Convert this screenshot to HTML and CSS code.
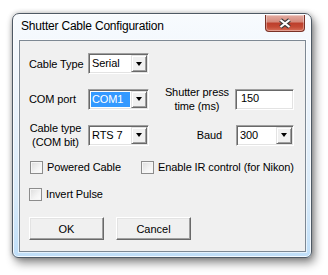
FILE: index.html
```html
<!DOCTYPE html>
<html lang="en">
<head>
    <meta charset="UTF-8">
    <meta name="viewport" content="width=device-width, initial-scale=1.0">
    <title>Shutter Cable Configuration</title>
    <link rel="stylesheet" href="styles.css">
</head>
<body>
    <div class="window">
        <!-- title bar -->
        <div class="titlebar">
            <span class="title">Shutter Cable Configuration</span>
            <span class="close-btn">
                <svg width="14" height="11" viewBox="0 0 14 11">
                    <path d="M2.5 2 L11.5 9 M11.5 2 L2.5 9" stroke="#3c3c3c" stroke-width="4.2" fill="none"/>
                    <path d="M2.5 2 L11.5 9 M11.5 2 L2.5 9" stroke="#ffffff" stroke-width="2.2" fill="none"/>
                </svg>
            </span>
        </div>

        <div class="client">
            <div class="field-row row-first">
                <span class="lbl">Cable Type</span>
                <div class="combo">
                    <span class="combo-text">Serial</span>
                    <span class="combo-btn"><i class="arrow"></i></span>
                </div>
            </div>

            <div class="field-row row-tall">
                <span class="lbl">COM port</span>
                <div class="combo">
                    <span class="combo-text selected">COM1</span>
                    <span class="combo-btn"><i class="arrow"></i></span>
                </div>
                <span class="lbl lbl-center lbl-right">Shutter press<br>time (ms)</span>
                <div class="edit">150</div>
            </div>

            <div class="field-row row-tall row-third">
                <span class="lbl lbl-center">Cable type<br>(COM bit)</span>
                <div class="combo">
                    <span class="combo-text">RTS 7</span>
                    <span class="combo-btn"><i class="arrow"></i></span>
                </div>
                <span class="lbl lbl-baud">Baud</span>
                <div class="combo combo-baud">
                    <span class="combo-text">300</span>
                    <span class="combo-btn"><i class="arrow"></i></span>
                </div>
            </div>

            <div class="check-row">
                <label class="check check-wide"><span class="box"></span>Powered Cable</label>
                <label class="check"><span class="box"></span>Enable IR control (for Nikon)</label>
            </div>

            <div class="check-row check-row-2">
                <label class="check"><span class="box"></span>Invert Pulse</label>
            </div>

            <div class="buttons">
                <button class="btn">OK</button>
                <button class="btn">Cancel</button>
            </div>
        </div>
    </div>
</body>
</html>
```

FILE: styles.css
```css
* {
    margin: 0;
    padding: 0;
    box-sizing: border-box;
}

body {
    font-family: 'Liberation Sans', Arial, sans-serif;
    font-size: 11px;
    letter-spacing: -0.1px;
    color: #000;
    background-color: #fff;
    width: 328px;
    height: 275px;
    overflow: hidden;
}

/* window frame */
.window {
    width: 300px;
    height: 245px;
    margin: 13px 0 0 12px;
    padding: 0 5px 5px 6px;
    border: 1px solid #4e5964;
    border-radius: 7px 7px 6px 6px;
    background: linear-gradient(to bottom, #f8fbfe 0%, #ebf3fb 35%, #d8eaf9 75%, #bfdef8 100%);
    box-shadow: inset 0 0 0 1px rgba(255, 255, 255, 0.8), 3px 5px 10px rgba(0, 0, 0, 0.45), 0 0 5px rgba(0, 0, 0, 0.25);
}

.titlebar {
    height: 26px;
    display: flex;
    justify-content: space-between;
    align-items: flex-start;
}

.title {
    font-size: 12px;
    letter-spacing: -0.2px;
    line-height: 25px;
    padding-left: 2px;
}

/* red close button */
.close-btn {
    width: 40px;
    height: 17px;
    margin: 1px 1px 0 0;
    display: flex;
    justify-content: center;
    align-items: center;
    border: 1px solid #7a3126;
    border-top: none;
    border-radius: 0 0 4px 4px;
    background: linear-gradient(to bottom, #e4aca2 0%, #d58a7c 42%, #bd3f2c 52%, #c44a35 75%, #d8705a 100%);
    box-shadow: inset 0 0 0 1px rgba(255, 255, 255, 0.35);
}

/* client area */
.client {
    height: 212px;
    border: 1px solid #7d8893;
    background-color: #f0f0f0;
    padding: 12px 0 0 9px;
    box-shadow: 0 0 0 1px rgba(255, 255, 255, 0.6);
}

.field-row {
    display: grid;
    grid-template-columns: 53px 61px 74px 59px;
    column-gap: 6px;
    align-items: center;
}

.row-tall {
    height: 28px;
    margin-top: 11px;
}

.row-third {
    margin-top: 8px;
}

.lbl {
    line-height: 14px;
    white-space: nowrap;
}

.lbl-center {
    text-align: center;
}

.lbl-right {
    justify-self: end;
}

.lbl-baud {
    justify-self: end;
    margin-right: 7px;
}

/* sunken 3d border for combos and edit boxes */
.combo,
.edit {
    height: 21px;
    background-color: #fff;
    border-style: solid;
    border-width: 1px;
    border-color: #a0a0a0 #fff #fff #a0a0a0;
    box-shadow: inset 1px 1px 0 #696969, inset -1px -1px 0 #e3e3e3;
}

.combo {
    width: 61px;
    display: flex;
    padding: 1px;
}

.combo-baud {
    width: 58px;
    margin-left: 1px;
}

.combo-text {
    flex: 1;
    margin: 1px;
    padding-left: 1px;
    line-height: 15px;
}

.combo-text.selected {
    background-color: #3399ff;
    color: #fff;
}

.combo-btn {
    width: 16px;
    height: 17px;
    display: flex;
    justify-content: center;
    align-items: center;
    background-color: #f0f0f0;
    border-style: solid;
    border-width: 1px;
    border-color: #e3e3e3 #696969 #696969 #e3e3e3;
    box-shadow: inset 1px 1px 0 #fff, inset -1px -1px 0 #a0a0a0;
}

.arrow {
    width: 0;
    height: 0;
    border-left: 3.5px solid transparent;
    border-right: 3.5px solid transparent;
    border-top: 4px solid #000;
}

.edit {
    width: 59px;
    padding-left: 5px;
    line-height: 17px;
}

/* check boxes */
.check-row {
    display: flex;
    align-items: center;
    height: 16px;
    margin-top: 10px;
    padding-left: 1px;
}

.check-row-2 {
    margin-top: 11px;
    padding-left: 0;
}

.check {
    display: flex;
    align-items: center;
    gap: 4px;
    white-space: nowrap;
}

.check-wide {
    width: 111px;
}

.box {
    width: 13px;
    height: 13px;
    border: 1px solid #8c8c8c;
    background: linear-gradient(135deg, #dcdcdc 0%, #f4f4f4 60%, #fdfdfd 100%);
    box-shadow: inset 0 0 0 1px #f6f6f6;
}

/* dialog buttons */
.buttons {
    display: flex;
    gap: 12px;
    margin-top: 15px;
}

.btn {
    width: 75px;
    height: 23px;
    font-family: inherit;
    font-size: 11px;
    color: #000;
    background-color: #f0f0f0;
    border-style: solid;
    border-width: 1px;
    border-color: #fff #696969 #696969 #fff;
    box-shadow: inset -1px -1px 0 #a0a0a0, inset 1px 1px 0 #e3e3e3;
}
```
